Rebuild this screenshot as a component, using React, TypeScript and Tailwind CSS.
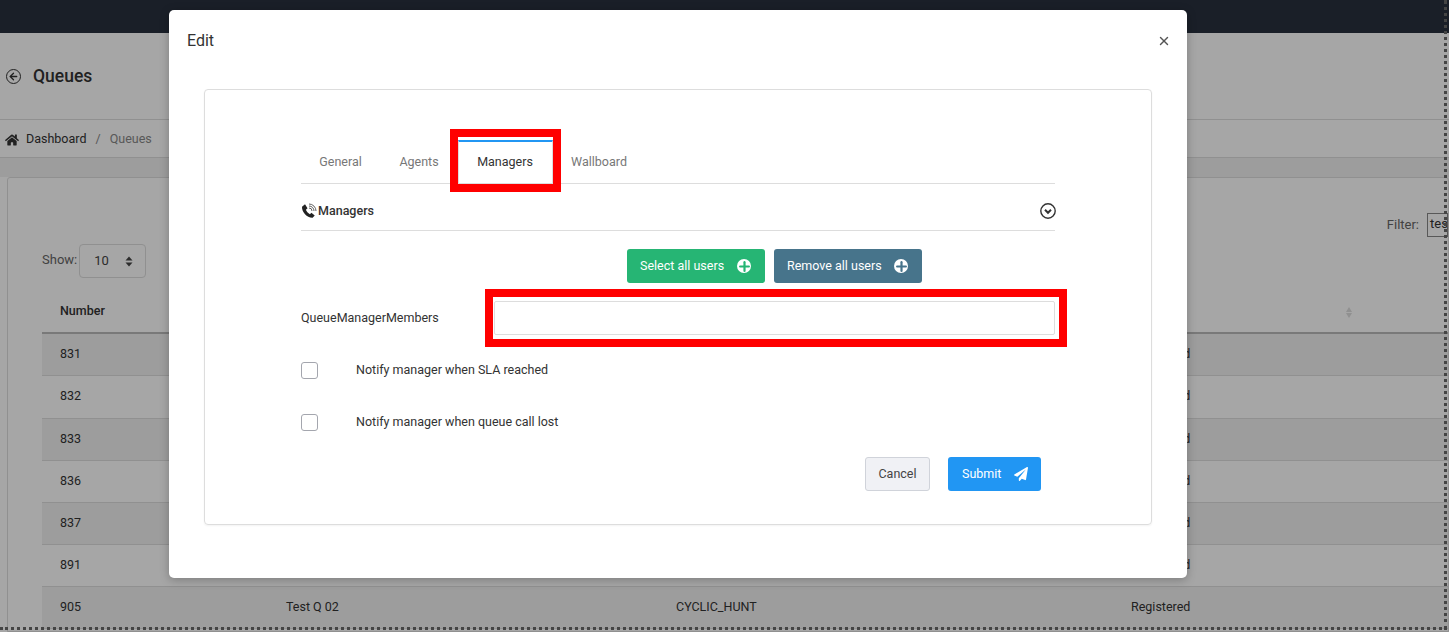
import { ArrowLeft, Plus, X } from "lucide-react"
import { FaHome, FaPaperPlane } from "react-icons/fa"

const rows = [
  { num: "831", odd: true, tall: false },
  { num: "832", odd: false, tall: true },
  { num: "833", odd: true, tall: false },
  { num: "836", odd: false, tall: false },
  { num: "837", odd: true, tall: false },
  { num: "891", odd: false, tall: false },
]

function PlusDisc({ color }: { color: string }) {
  return (
    <span className="flex h-[14px] w-[14px] items-center justify-center overflow-hidden rounded-full bg-white">
      <Plus size={15} strokeWidth={3.5} color={color} className="shrink-0" />
    </span>
  )
}

function PhoneIcon() {
  return (
    <svg width="16" height="16" viewBox="0 0 24 24" fill="none">
      <path
        d="M1.500 5.500 6 2l3.800 6-2.400 2.200c.8 2.500 3.200 5.200 6 6.500l2.200-2.200 5 4.200-3.200 3.300C9.500 22.500 1 13.500 1.500 5.500Z"
        fill="#222"
      />
      <path d="M12 7.500a4.500 4.500 0 0 1 4.500 4.500M12 4.500a7.500 7.500 0 0 1 7.500 7.500M12 1.500A10.500 10.500 0 0 1 22.500 12" stroke="#555" strokeWidth="1.400" />
    </svg>
  )
}

function Background() {
  return (
    <div className="flex h-[632px] w-[1449px] flex-col overflow-hidden bg-[#fff] text-[12.500px] text-[#333]">
      <div className="h-[33px] shrink-0 bg-[#29303e]" />
      <div className="flex h-[87px] shrink-0 items-center gap-[12px] border-b border-[#ddd] bg-[#fff] pl-[6px]">
        <span className="flex h-[15px] w-[15px] items-center justify-center rounded-full border-[1.5px] border-[#333]">
          <ArrowLeft size={11} strokeWidth={2.8} color="#333" />
        </span>
        <span className="text-[17.500px] font-medium">Queues</span>
      </div>
      <div className="flex h-[38px] shrink-0 items-center border-b border-[#ddd] bg-[#fff] pl-[5px] pt-[2px]">
        <FaHome size={14} color="#333" />
        <span className="ml-[7px]">Dashboard</span>
        <span className="mx-[9px] text-[#888]">/</span>
        <span className="text-[#888]">Queues</span>
      </div>
      <div className="h-[19px] shrink-0 bg-[#f2f2f2]" />
      <div className="ml-[7px] flex-1 rounded-t-[3px] border border-[#ddd] bg-[#fff] pl-[34px]">
        <div className="flex h-[117px] items-start justify-between pt-[33px] text-[13px]">
          <div className="mt-[39px] flex items-start">
            <span className="text-[#666]">Show:</span>
            <span className="-mt-[6px] ml-[2px] flex h-[34px] w-[67px] items-center justify-between rounded-[4px] border border-[#ddd] pl-[14px] pr-[12px] text-[#444]">
              10
              <svg width="8" height="11" viewBox="0 0 8 11" fill="#444">
                <path d="M4 0.500 7.500 4.500H.5ZM4 10.500.5 6.500H7.500Z" />
              </svg>
            </span>
          </div>
          <div className="flex items-center pt-[2px]">
            <span className="text-[#666]">Filter:</span>
            <span className="ml-[8px] h-[24px] w-[21px] overflow-hidden border border-[#888] pl-[2px] text-[#333]">tes</span>
          </div>
        </div>
        <div className="flex h-[39px] items-center border-b-2 border-[#bbb] pb-[5px] pl-[18px]">
          <span className="font-medium">Number</span>
          <span className="ml-auto mr-[96px] flex translate-y-[1px] flex-col gap-[1px]">
            <span className="h-0 w-0 border-x-[3px] border-b-[5px] border-x-transparent border-b-[#ddd]" />
            <span className="h-0 w-0 border-x-[3px] border-t-[5px] border-x-transparent border-t-[#ddd]" />
          </span>
        </div>
        {rows.map((r) => (
          <div
            key={r.num}
            className={`flex items-center border-b border-[#ddd] pl-[18px] ${r.tall ? "h-[43px] pb-[1px]" : "h-[42px]"} ${r.odd ? "bg-[#f2f2f2]" : "bg-[#fff]"}`}
          >
            <span className="w-[1071px]">{r.num}</span>
            <span>Registered</span>
          </div>
        ))}
        <div className="flex h-[42px] items-center border-b border-[#ddd] bg-[#f2f2f2] pl-[18px]">
          <span className="w-[226px]">905</span>
          <span className="w-[390px]">Test Q 02</span>
          <span className="w-[455px]">CYCLIC_HUNT</span>
          <span>Registered</span>
        </div>
      </div>
    </div>
  )
}

export default function App() {
  return (
    <div className="relative h-[632px] w-[1449px] overflow-hidden font-['Roboto',sans-serif]">
      <Background />

      {/* backdrop, with the dotted window edge on top of it */}
      <div className="absolute inset-0 bg-black/35" />
      <div className="absolute bottom-[2px] left-0 right-[2px] top-0 border-b-[3px] border-r-[3px] border-dotted border-[#444]" />

      {/* Edit dialog */}
      <div className="absolute left-[169px] top-[10px] flex h-[568px] w-[1018px] flex-col rounded-[5px] bg-white text-[#333] shadow-[0_2px_10px_rgba(0,0,0,0.25)]">
        <div className="flex h-[79px] shrink-0 items-start justify-between pl-[18px] pr-[16px] pt-[22px]">
          <span className="text-[16px] leading-[18px]">Edit</span>
          <X size={14} strokeWidth={2.4} color="#555" className="mt-[2px]" />
        </div>

        <div className="mx-[35px] h-[436px] rounded-[4px] border border-[#ddd] pl-[96px] pr-[96px] pt-[50px] shadow-[0_1px_2px_rgba(0,0,0,0.05)]">
          {/* tabs */}
          <div className="flex h-[44px] border-b border-[#ddd] text-[12.500px] text-[#777]">
            <span className="flex w-[79px] items-center justify-center border-t-2 border-t-transparent">General</span>
            <span className="flex w-[78px] items-center justify-center border-t-2 border-t-transparent">Agents</span>
            <span className="relative flex w-[95px] items-center justify-center border-x border-t-2 border-x-[#ddd] border-t-[#2196f3] bg-white pr-[1px] text-[#333]">
              Managers
              <span className="absolute -bottom-[9px] -left-[9px] -right-[9px] -top-[13px] border-[8px] border-[#f00]" />
            </span>
            <span className="flex w-[92px] items-center justify-center border-t-2 border-t-transparent">Wallboard</span>
          </div>

          {/* section header */}
          <div className="flex h-[47px] items-center justify-between border-b border-[#ddd] pt-[8px]">
            <div className="flex items-center gap-[1px] text-[12.500px] font-medium">
              <PhoneIcon />
              Managers
            </div>
            <svg width="16" height="16" viewBox="0 0 16 16" fill="none" stroke="#333" strokeWidth="1.400" className="translate-x-[1px]">
              <circle cx="8" cy="8" r="7.200" />
              <path d="M5 6.800 8 9.800l3-3" strokeWidth="2" />
            </svg>
          </div>

          <div className="flex justify-end gap-[9px] pr-[133px] pt-[18px] text-[12.500px] text-white">
            <button className="flex h-[34px] w-[138px] items-center justify-between rounded-[3px] bg-[#26b574] pl-[13px] pr-[14px]">
              Select all users
              <PlusDisc color="#26b574" />
            </button>
            <button className="flex h-[34px] w-[148px] items-center justify-between rounded-[3px] bg-[#47748b] pl-[13px] pr-[14px]">
              Remove all users
              <PlusDisc color="#47748b" />
            </button>
          </div>

          {/* members field */}
          <div className="mt-[18px] flex h-[34px] items-center text-[12.500px]">
            <span className="w-[193px]">QueueManagerMembers</span>
            <span className="relative h-[34px] flex-1 rounded-[2px] border border-[#ddd]">
              <span className="absolute -bottom-[13px] -left-[10px] -right-[13px] -top-[13px] border-[8px] border-[#f00]" />
            </span>
          </div>

          <label className="mt-[26px] flex h-[18px] items-center text-[12.500px]">
            <span className="h-[17px] w-[17px] rounded-[3px] border border-[#a4a6ae]" />
            <span className="ml-[38px]">Notify manager when SLA reached</span>
          </label>
          <label className="mt-[34px] flex h-[18px] items-center text-[12.500px]">
            <span className="h-[17px] w-[17px] rounded-[3px] border border-[#a4a6ae]" />
            <span className="ml-[38px]">Notify manager when queue call lost</span>
          </label>

          <div className="mt-[26px] flex justify-end gap-[18px] pr-[14px] text-[12.500px]">
            <button className="h-[34px] w-[65px] rounded-[3px] border border-[#d0d3da] bg-[#f0f1f5] text-[#444]">Cancel</button>
            <button className="flex h-[34px] w-[93px] items-center justify-between rounded-[3px] bg-[#2196f3] pl-[14px] pr-[13px] text-white">
              Submit
              <FaPaperPlane size={14} />
            </button>
          </div>
        </div>
      </div>
    </div>
  )
}
